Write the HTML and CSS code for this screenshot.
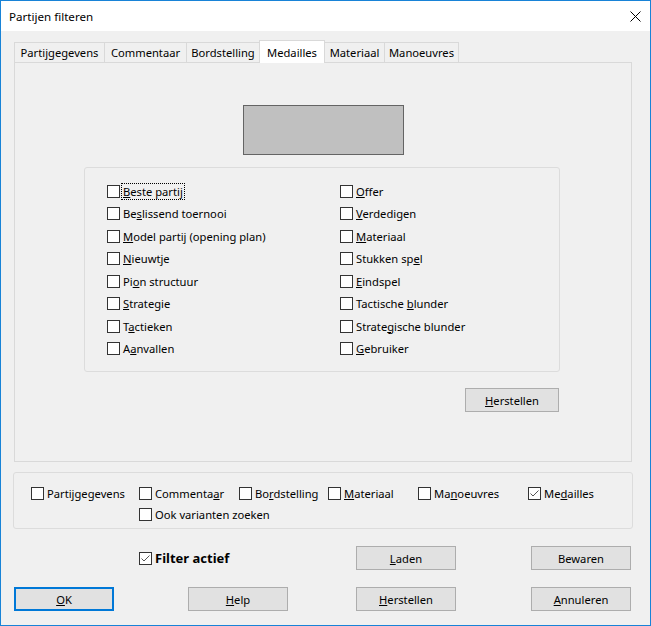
FILE: index.html
```html
<!DOCTYPE html>
<html lang="nl">
<head>
<meta charset="utf-8">
<title>Partijen filteren</title>
<link rel="stylesheet" href="styles.css">
</head>
<body>
<div class="window">
  <div class="titlebar">
    <span class="title">Partijen filteren</span>
    <svg class="close" width="11" height="11" viewBox="0 0 11 11"><path d="M0.5 0.5 L10.5 10.5 M10.5 0.5 L0.5 10.5" stroke="#000" stroke-width="1" fill="none"/></svg>
  </div>

  <div class="tabs">
    <div class="tab t1">Partijgegevens</div>
    <div class="tab t2">Commentaar</div>
    <div class="tab t3">Bordstelling</div>
    <div class="tab t4 active">Medailles</div>
    <div class="tab t5">Materiaal</div>
    <div class="tab t6">Manoeuvres</div>
  </div>

  <div class="panel">
    <div class="preview"></div>
    <div class="group">
      <div class="checks">
        <label class="cb"><span class="box"></span><span class="focus"><u>B</u>este partij</span></label>
        <label class="cb"><span class="box"></span><span>Be<u>s</u>lissend toernooi</span></label>
        <label class="cb"><span class="box"></span><span><u>M</u>odel partij (opening plan)</span></label>
        <label class="cb"><span class="box"></span><span><u>N</u>ieuwtje</span></label>
        <label class="cb"><span class="box"></span><span>Pi<u>o</u>n structuur</span></label>
        <label class="cb"><span class="box"></span><span><u>S</u>trategie</span></label>
        <label class="cb"><span class="box"></span><span>T<u>a</u>ctieken</span></label>
        <label class="cb"><span class="box"></span><span>A<u>a</u>nvallen</span></label>
        <label class="cb"><span class="box"></span><span><u>O</u>ffer</span></label>
        <label class="cb"><span class="box"></span><span><u>V</u>erdedigen</span></label>
        <label class="cb"><span class="box"></span><span><u>M</u>ateriaal</span></label>
        <label class="cb"><span class="box"></span><span>Stukken sp<u>e</u>l</span></label>
        <label class="cb"><span class="box"></span><span><u>E</u>indspel</span></label>
        <label class="cb"><span class="box"></span><span>Tactische <u>b</u>lunder</span></label>
        <label class="cb"><span class="box"></span><span>Strate<u>g</u>ische blunder</span></label>
        <label class="cb"><span class="box"></span><span><u>G</u>ebruiker</span></label>
      </div>
    </div>
    <button class="btn reset"><u>H</u>erstellen</button>
  </div>

  <div class="scope">
    <label class="cb"><span class="box"></span><span>Partijgegevens</span></label>
    <label class="cb"><span class="box"></span><span>Commenta<u>a</u>r</span></label>
    <label class="cb"><span class="box"></span><span>Bo<u>r</u>dstelling</span></label>
    <label class="cb"><span class="box"></span><span><u>M</u>ateriaal</span></label>
    <label class="cb"><span class="box"></span><span>Ma<u>n</u>oeuvres</span></label>
    <label class="cb"><span class="box checked"><svg width="11" height="11" viewBox="0 0 11 11"><path d="M1.5 5.5 L4 8 L9.5 2.5" stroke="#555" stroke-width="1" fill="none"/></svg></span><span>Me<u>d</u>ailles</span></label>
    <label class="cb ook"><span class="box"></span><span>Ook varianten zoeken</span></label>
  </div>

  <div class="actions">
    <label class="cb filter"><span class="box checked"><svg width="11" height="11" viewBox="0 0 11 11"><path d="M1.5 5.5 L4 8 L9.5 2.5" stroke="#555" stroke-width="1" fill="none"/></svg></span><span>Filter actief</span></label>
    <button class="btn laden"><u>L</u>aden</button>
    <button class="btn bewaren">Bewaren</button>
    <button class="btn ok"><u>O</u>K</button>
    <button class="btn"><u>H</u>elp</button>
    <button class="btn"><u>H</u>erstellen</button>
    <button class="btn"><u>A</u>nnuleren</button>
  </div>
</div>
</body>
</html>
```

FILE: styles.css
```css
* {
  box-sizing: border-box;
}

html,
body {
  margin: 0;
  padding: 0;
  background: #ffffff;
}

body {
  font-family: "Noto Sans", "Open Sans", sans-serif;
  font-size: 11.2px;
  color: #000000;
}

.window {
  width: 651px;
  height: 626px;
  border: 1px solid #1883d7;
  background: #f0f0f0;
}

.titlebar {
  height: 30px;
  background: #ffffff;
  display: flex;
  align-items: center;
  justify-content: space-between;
  padding: 0 9px 0 8px;
  font-size: 11.6px;
}

.close {
  display: block;
}

.tabs {
  display: flex;
  align-items: flex-end;
  height: 31px;
  margin-left: 13px;
}

.tab {
  height: 20px;
  border: 1px solid #d9d9d9;
  border-bottom: none;
  margin-right: -1px;
  display: flex;
  align-items: center;
  justify-content: center;
  background: #f0f0f0;
  white-space: nowrap;
}

.tab.active {
  height: 23px;
  margin-bottom: -1px;
  background: #ffffff;
  position: relative;
  z-index: 1;
}

.t1 { width: 91px; }
.t2 { width: 83px; }
.t3 { width: 74px; }
.t4 { width: 66px; }
.t5 { width: 61px; }
.t6 { width: 75px; }

.panel {
  margin-left: 13px;
  width: 618px;
  height: 400px;
  border: 1px solid #d9d9d9;
  padding-top: 42px;
}

.preview {
  width: 161px;
  height: 50px;
  margin: 0 auto;
  border: 1px solid #646464;
  background: #c0c0c0;
}

.group {
  margin: 12px 0 0 69px;
  width: 476px;
  border: 1px solid #dcdcdc;
  border-radius: 3px;
  padding: 12px 0 11px 22px;
}

.checks {
  display: grid;
  grid-template-columns: 233px auto;
  grid-template-rows: repeat(8, 22.5px);
  grid-auto-flow: column;
}

.cb {
  display: flex;
  align-items: center;
  gap: 3px;
  white-space: nowrap;
}

.box {
  width: 13px;
  height: 13px;
  flex: none;
  border: 1px solid #333333;
  background: #ffffff;
  display: flex;
}

.box svg {
  display: block;
}

.focus {
  outline: 1px dotted #000000;
  outline-offset: 0;
  padding: 0 1px;
  margin-left: -1px;
}

.btn {
  font: inherit;
  color: #000000;
  width: 100px;
  height: 24px;
  padding: 0;
  background: #e1e1e1;
  border: 1px solid #adadad;
}

.reset {
  display: block;
  width: 94px;
  margin: 16px 0 0 450px;
}

.scope {
  margin: 10px 0 0 12px;
  width: 620px;
  height: 57px;
  border: 1px solid #dcdcdc;
  border-radius: 3px;
  padding: 10px 0 0 17px;
  display: grid;
  grid-template-columns: 108px 100px 89px 90px 110px auto;
  grid-template-rows: 21px 21px;
}

.ook {
  grid-column: 2;
  grid-row: 2;
}

.actions {
  margin: 17px 0 0 13px;
  display: grid;
  grid-template-columns: 174px 168px 175px 100px;
  grid-template-rows: 24px 24px;
  row-gap: 17px;
}

.filter {
  grid-column: 1 / span 2;
  padding-left: 125px;
  font-weight: bold;
  font-size: 13px;
}

.laden {
  grid-column: 3;
}

.bewaren {
  grid-column: 4;
}

.ok {
  border: 2px solid #0078d7;
}
```
